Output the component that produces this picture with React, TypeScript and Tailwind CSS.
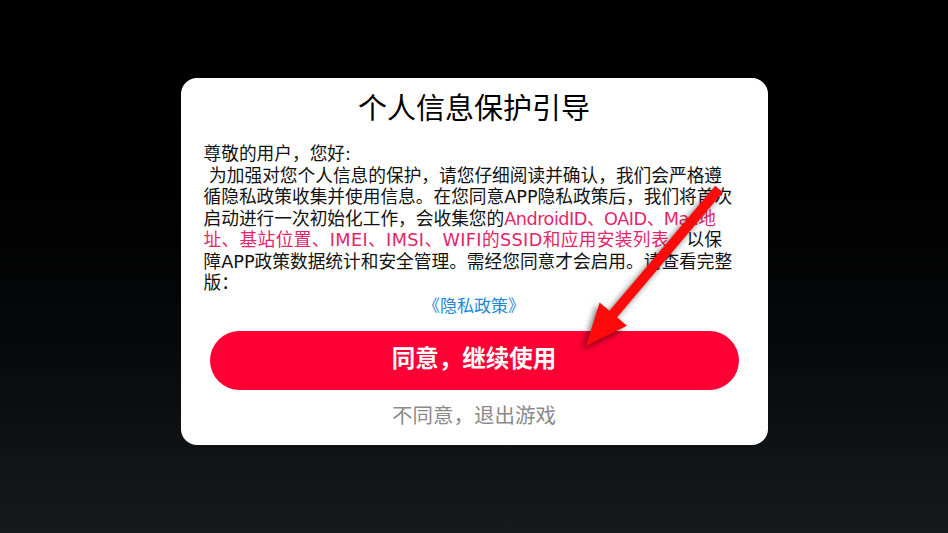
import React from 'react';

const font = { fontFamily: '"Liberation Sans", "Noto Sans CJK SC", sans-serif' };
const bodyFont = { fontFamily: '"DejaVu Sans", "Noto Sans CJK SC", sans-serif' };

function Arrow() {
  // red annotation arrow lying over the dialog
  return (
    <svg
      className="pointer-events-none absolute inset-0 h-full w-full"
      viewBox="0 0 948 533"
      style={{ filter: 'drop-shadow(-3px 3px 3px rgba(0,0,0,0.55))' }}
    >
      <polygon
        fill="#ff0a0a"
        points="715.2,185.75 722.8,192.25 617.1,317.35 627,325.8 586,346 599.6,302.4 609.5,310.85"
      />
    </svg>
  );
}

export default function App() {
  return (
    <div className="relative flex h-screen w-full justify-center bg-gradient-to-b from-black to-[#17191c] pt-[78px]" style={font}>
      <div className="flex h-[367px] w-[587px] flex-col rounded-[16px] bg-white px-[23px] pt-[13px]">
        <h1 className="text-center text-[29px] leading-[36px] font-normal text-black">个人信息保护引导</h1>

        <div className="mt-[17px] text-[17.7px] leading-[21.5px] text-[#111] whitespace-nowrap" style={bodyFont}>
          <div>尊敬的用户，您好:</div>
          <div>&nbsp;为加强对您个人信息的保护，请您仔细阅读并确认，我们会严格遵</div>
          <div>循隐私政策收集并使用信息。在您同意APP隐私政策后，我们将首次</div>
          <div>
            启动进行一次初始化工作，会收集您的
            <span className="tracking-[-0.5px] text-[#e3266a]">AndroidID、OAID、Mac地</span>
          </div>
          <div>
            <span className="tracking-[0.35px] text-[#e3266a]">址、基站位置、IMEI、IMSI、WIFI的SSID和应用安装列表</span>，以保
          </div>
          <div>障APP政策数据统计和安全管理。需经您同意才会启用。请查看完整</div>
          <div>版：</div>
        </div>

        <a className="mt-[2px] block text-center text-[17px] leading-[20px] text-[#1e86d6]">《隐私政策》</a>

        <button className="mx-[6px] mt-[14px] h-[59px] rounded-full bg-[#ff0035] text-[23.5px] font-bold text-white">
          同意，继续使用
        </button>

        <button className="mt-[13px] text-center text-[20.5px] leading-[26px] text-[#8a8a8a]">不同意，退出游戏</button>
      </div>
      <Arrow />
    </div>
  );
}
